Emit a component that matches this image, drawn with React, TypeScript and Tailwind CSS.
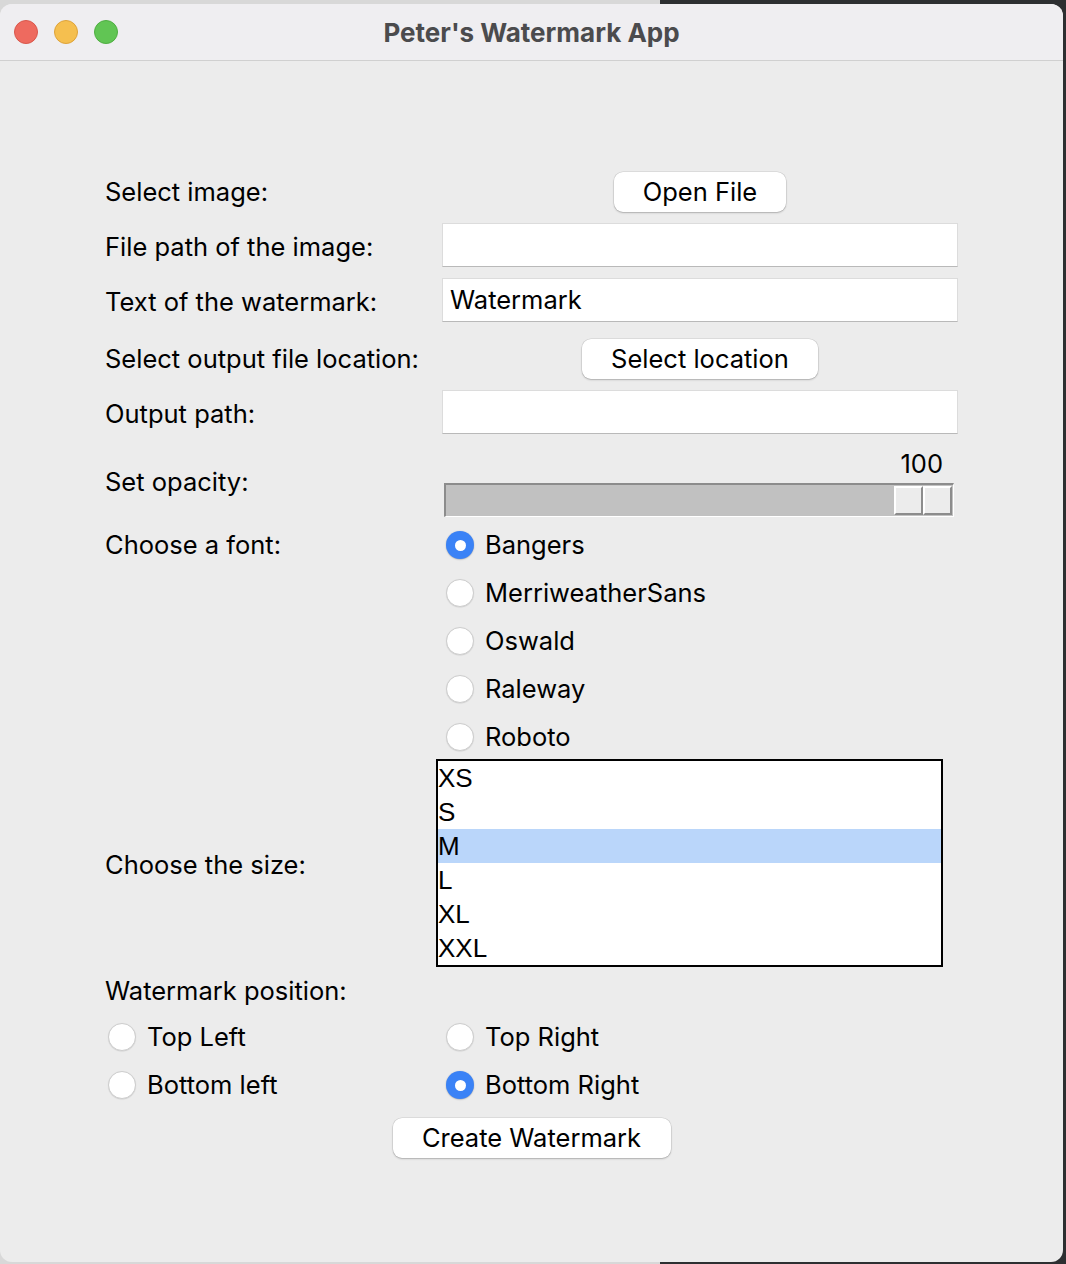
import React from 'react';

const Radio: React.FC<{ checked?: boolean }> = ({ checked }) =>
  checked ? (
    <span className="flex h-[28px] w-[28px] shrink-0 items-center justify-center rounded-full bg-[#3a82f6] shadow-[0_0.5px_1.5px_rgba(0,0,0,0.3)]">
      <span className="h-[11px] w-[11px] rounded-full bg-white" />
    </span>
  ) : (
    <span className="h-[28px] w-[28px] shrink-0 rounded-full border border-[#cdcdcd] bg-white shadow-[0_0.5px_1px_rgba(0,0,0,0.12)]" />
  );

const MacButton: React.FC<{ label: string; width: string }> = ({ label, width }) => (
  <button
    className={`${width} h-[40px] rounded-[9px] bg-white text-[25.5px] text-black shadow-[0_0_0_0.5px_rgba(0,0,0,0.12),0_1px_2px_rgba(0,0,0,0.22)]`}
  >
    {label}
  </button>
);

const Entry: React.FC<{ value?: string }> = ({ value }) => (
  <div className="ml-[5px] flex h-[44px] w-[516px] items-center border border-[#dcdcdc] border-b-[#b9b9b9] bg-white px-[7px] text-[25.5px] text-black">
    {value}
  </div>
);

const fonts = ['Bangers', 'MerriweatherSans', 'Oswald', 'Raleway', 'Roboto'];
const sizes = ['XS', 'S', 'M', 'L', 'XL', 'XXL'];

export default function App() {
  return (
    <div className="h-[1264px] w-[1066px] bg-[linear-gradient(to_right,#d8d8d8_0,#d8d8d8_660px,#2d2f31_660px)] pb-[2px] pr-[3px] pt-[4px] font-['Inter',sans-serif]">
      <div className="flex h-[1258px] w-[1063px] flex-col overflow-hidden rounded-[12px] bg-[#ececec]">
        {/* title bar */}
        <div className="relative flex h-[57px] shrink-0 items-center justify-center border-b border-[#d0d0d0] bg-[#efeef1]">
          <div className="absolute left-[14px] top-[16px] flex gap-[16px]">
            <span className="h-[24px] w-[24px] rounded-full border border-[#d9574c] bg-[#ee6a5f]" />
            <span className="h-[24px] w-[24px] rounded-full border border-[#dea33a] bg-[#f5bf4f]" />
            <span className="h-[24px] w-[24px] rounded-full border border-[#4fae42] bg-[#61c554]" />
          </div>
          <span className="text-[26px] font-bold text-[#4b4b4d]">Peter's Watermark App</span>
        </div>

        <div className="flex flex-col pl-[105px] pt-[105px] text-[25.5px] text-black">
          <div className="flex h-[52px] items-center">
            <span className="w-[332px]">Select image:</span>
            <div className="ml-[5px] flex w-[516px] justify-center">
              <MacButton label="Open File" width="w-[172px]" />
            </div>
          </div>
          <div className="flex h-[53px] items-center">
            <span className="w-[332px] pt-[5px]">File path of the image:</span>
            <Entry />
          </div>
          <div className="flex h-[58px] items-center">
            <span className="w-[332px] pt-[4px]">Text of the watermark:</span>
            <Entry value="Watermark" />
          </div>
          <div className="flex h-[60px] items-center">
            <span className="w-[332px]">Select output file location:</span>
            <div className="ml-[5px] flex w-[516px] justify-center">
              <MacButton label="Select location" width="w-[236px]" />
            </div>
          </div>
          <div className="flex h-[46px] items-center">
            <span className="w-[332px] pt-[5px]">Output path:</span>
            <Entry />
          </div>

          {/* opacity */}
          <div className="mt-[9px] flex items-center">
            <span className="w-[332px] pt-[3px]">Set opacity:</span>
            <div className="flex flex-col">
              <div className="flex h-[39px] w-[506px] items-center justify-end pt-[1px]">100</div>
              <div className="ml-[7px] flex h-[34px] w-[510px] justify-end border-l-2 border-t-2 border-b border-r border-[#8c8c8c] border-b-white border-r-white bg-[#c1c1c1] py-[1px] pr-[1px]">
                <div className="flex h-full">
                  <div className="w-[29px] border-2 border-[#8c8c8c] border-l-white border-t-white bg-[#ececec]" />
                  <div className="w-[29px] border-2 border-[#8c8c8c] border-l-white border-t-white bg-[#ececec]" />
                </div>
              </div>
            </div>
          </div>

          {/* fonts */}
          <div className="mt-[4px] flex items-start">
            <span className="flex h-[48px] w-[332px] items-center">Choose a font:</span>
            <div className="flex flex-col">
              {fonts.map((f, i) => (
                <div key={f} className="ml-[9px] flex h-[48px] items-center gap-[11px]">
                  <Radio checked={i === 0} />
                  <span>{f}</span>
                </div>
              ))}
            </div>
          </div>

          {/* size */}
          <div className="mt-[-2px] flex items-center">
            <span className="w-[332px] pt-[4px]">Choose the size:</span>
            <div className="ml-[-1px] w-[507px] border-2 border-black bg-white font-['Liberation_Sans',Arial,sans-serif] text-[26px]">
              {sizes.map((s) => (
                <div key={s} className={`flex h-[34px] items-center ${s === 'M' ? 'bg-[#bad6fa]' : ''}`}>
                  {s}
                </div>
              ))}
            </div>
          </div>

          <div className="mt-[2px] flex h-[44px] items-center">Watermark position:</div>
          <div className="grid grid-cols-[332px_520px]">
            <div className="ml-[3px] flex h-[48px] items-center gap-[11px]">
              <Radio />
              <span>Top Left</span>
            </div>
            <div className="ml-[9px] flex h-[48px] items-center gap-[11px]">
              <Radio />
              <span>Top Right</span>
            </div>
            <div className="ml-[3px] flex h-[48px] items-center gap-[11px]">
              <Radio />
              <span>Bottom left</span>
            </div>
            <div className="ml-[9px] flex h-[48px] items-center gap-[11px]">
              <Radio checked />
              <span>Bottom Right</span>
            </div>
          </div>
        </div>

        <div className="mt-[9px] flex justify-center">
          <MacButton label="Create Watermark" width="w-[278px]" />
        </div>
      </div>
    </div>
  );
}
